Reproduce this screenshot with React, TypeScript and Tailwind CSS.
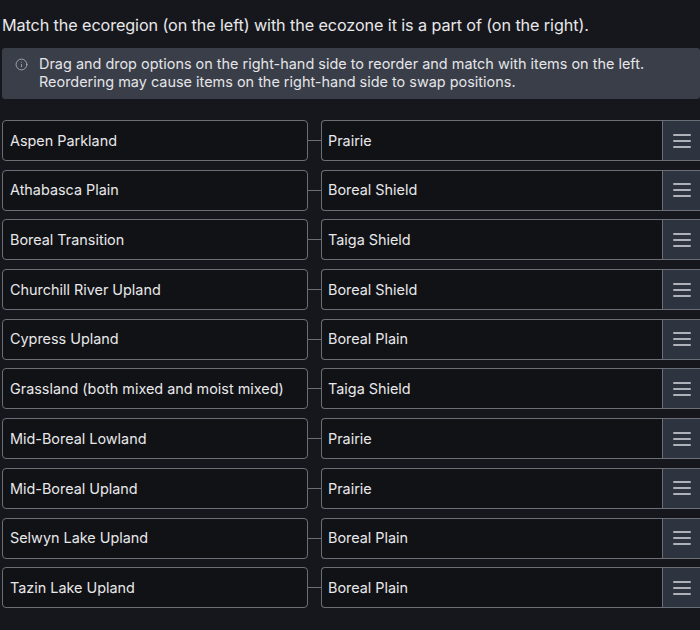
import { Info } from "lucide-react";

const rows: [string, string][] = [
  ["Aspen Parkland", "Prairie"],
  ["Athabasca Plain", "Boreal Shield"],
  ["Boreal Transition", "Taiga Shield"],
  ["Churchill River Upland", "Boreal Shield"],
  ["Cypress Upland", "Boreal Plain"],
  ["Grassland (both mixed and moist mixed)", "Taiga Shield"],
  ["Mid-Boreal Lowland", "Prairie"],
  ["Mid-Boreal Upland", "Prairie"],
  ["Selwyn Lake Upland", "Boreal Plain"],
  ["Tazin Lake Upland", "Boreal Plain"],
];

export default function App() {
  return (
    <div className="h-[630px] w-[700px] overflow-hidden bg-[#16171c] font-['Inter',sans-serif] text-[#e8e8ea]">
      <p className="pl-[2px] pt-[14px] text-[16.2px] leading-[22px] tracking-[-0.1px]">
        Match the ecoregion (on the left) with the ecozone it is a part of (on the right).
      </p>

      <div className="ml-[2px] mt-[12px] flex h-[51px] items-start gap-[8px] rounded-[3px] bg-[#3a3e48] pl-[13px] pt-[7px] text-[14.45px] leading-[18px] text-[#e4e5e8]">
        <Info className="mt-[3px] h-[13px] w-[13px] shrink-0 text-[#b3b6bd]" strokeWidth={1.5} />
        <div className="pl-[3px]">
          <p>Drag and drop options on the right-hand side to reorder and match with items on the left.</p>
          <p>Reordering may cause items on the right-hand side to swap positions.</p>
        </div>
      </div>

      <div className="mt-[21px] flex flex-col gap-[8.7px]">
        {rows.map(([left, right]) => (
          <div key={left} className="flex h-[41px] items-center">
            <div className="ml-[2px] flex h-full w-[306px] items-center rounded-[4px] border border-[#6b6e75] bg-[#111216] pl-[7px] text-[14.4px]">
              {left}
            </div>
            <div className="h-px w-[13px] bg-[#6b6e75]" />
            <div className="flex h-full flex-1 items-center rounded-l-[4px] border border-r-0 border-[#6b6e75] bg-[#111216] text-[14.4px]">
              <span className="flex-1 pl-[6px]">{right}</span>
              <div className="flex h-full w-[38px] flex-col items-center justify-center gap-[4px] border-l border-[#6b6e75] bg-[#2e343f]">
                <span className="h-[2px] w-[18px] rounded bg-[#aeb1b8]" />
                <span className="h-[2px] w-[18px] rounded bg-[#aeb1b8]" />
                <span className="h-[2px] w-[18px] rounded bg-[#aeb1b8]" />
              </div>
            </div>
          </div>
        ))}
      </div>
    </div>
  );
}
